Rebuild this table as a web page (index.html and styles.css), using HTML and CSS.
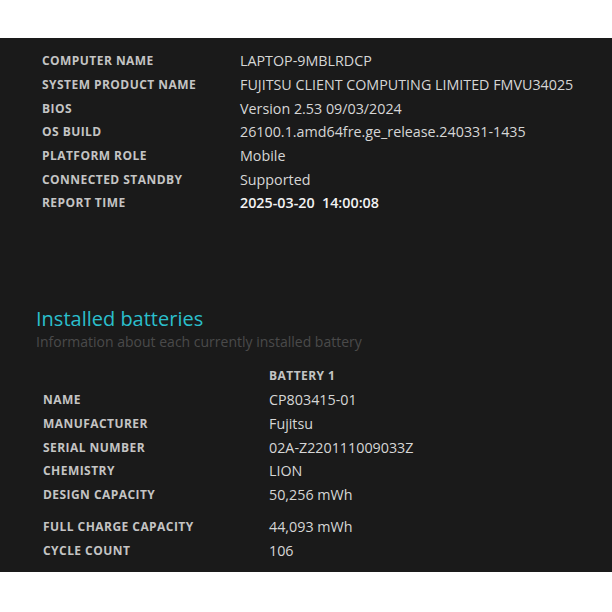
FILE: index.html
```html
<!DOCTYPE html>
<html>
<head>
<link rel="stylesheet" href="styles.css">
</head>
<body>
<div class="report">
  <table class="info">
    <tr><td class="label">COMPUTER NAME</td><td class="value">LAPTOP-9MBLRDCP</td></tr>
    <tr><td class="label">SYSTEM PRODUCT NAME</td><td class="value">FUJITSU CLIENT COMPUTING LIMITED FMVU34025</td></tr>
    <tr><td class="label">BIOS</td><td class="value">Version 2.53 09/03/2024</td></tr>
    <tr><td class="label">OS BUILD</td><td class="value">26100.1.amd64fre.ge_release.240331-1435</td></tr>
    <tr><td class="label">PLATFORM ROLE</td><td class="value">Mobile</td></tr>
    <tr><td class="label">CONNECTED STANDBY</td><td class="value">Supported</td></tr>
    <tr><td class="label">REPORT TIME</td><td class="value strong">2025-03-20&nbsp; 14:00:08</td></tr>
  </table>

  <h2>Installed batteries</h2>
  <p class="sub">Information about each currently installed battery</p>

  <table class="info batteries">
    <tr><td class="label"></td><td class="label head">BATTERY 1</td></tr>
    <tr><td class="label">NAME</td><td class="value">CP803415-01</td></tr>
    <tr><td class="label">MANUFACTURER</td><td class="value">Fujitsu</td></tr>
    <tr><td class="label">SERIAL NUMBER</td><td class="value">02A-Z220111009033Z</td></tr>
    <tr><td class="label">CHEMISTRY</td><td class="value">LION</td></tr>
    <tr><td class="label">DESIGN CAPACITY</td><td class="value">50,256 mWh</td></tr>
    <tr class="gap"><td class="label">FULL CHARGE CAPACITY</td><td class="value">44,093 mWh</td></tr>
    <tr><td class="label">CYCLE COUNT</td><td class="value">106</td></tr>
  </table>
</div>
</body>
</html>
```

FILE: styles.css
```css
body{
margin:0;
background:#ffffff;
font-family:"Open Sans", sans-serif;
}
.report{
margin-top:38px;
height:534px;
background:#1a1a1a;
padding:11px 0 0 36px;
box-sizing:border-box;
}
.info{
border-collapse:collapse;
margin-left:6px;
}
.info td{
padding:0;
height:23.7px;
}
.label{
width:198px;
font-size:12px;
font-weight:bold;
letter-spacing:0.45px;
color:#c4c4c4;
}
.value{
font-size:14.3px;
color:#d6d6d6;
white-space:nowrap;
}
.strong{
font-weight:600;
color:#f2f2f2;
}
h2{
margin:92px 0 0 0;
font-size:20px;
font-weight:normal;
color:#2bbfcc;
line-height:24px;
}
.sub{
margin:0;
font-size:14px;
color:#4a4a4a;
line-height:22px;
}
.batteries{
margin-top:11px;
margin-left:7px;
}
.batteries .label{
width:226px;
}
.info.batteries td{
height:23.8px;
}
.info.batteries .gap td{
padding-top:8px;
}
```
